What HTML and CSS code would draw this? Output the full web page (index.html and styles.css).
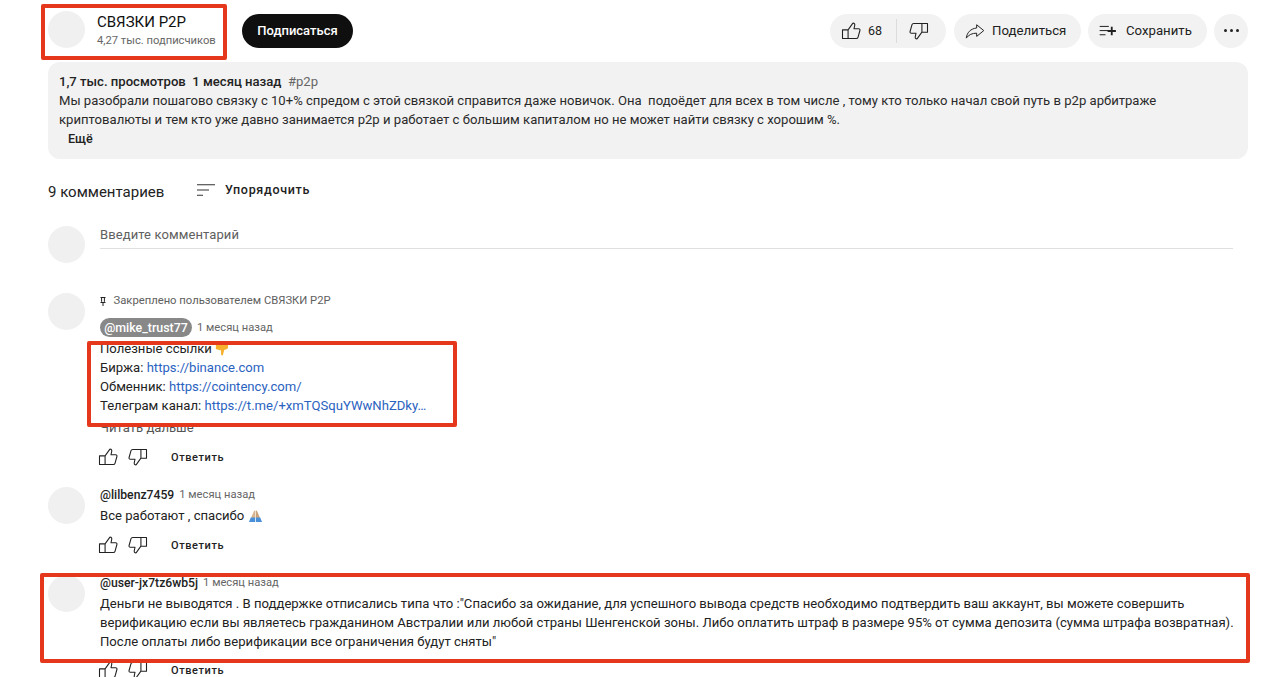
FILE: index.html
```html
<!DOCTYPE html>
<html lang="ru">
<head>
<meta charset="utf-8">
<title>СВЯЗКИ P2P</title>
<link rel="stylesheet" href="styles.css">
</head>
<body>
<svg class="defs" width="0" height="0" aria-hidden="true">
  <symbol id="like" viewBox="0 0 24 24"><path d="M8.5 21H1.8V10.6H8.5M8.5 21V10.6L14.3 2.6C15.8 2.4 16.8 3.4 16.5 5L15.6 9.3H21.2C22.4 9.3 23 10.3 22.7 11.4L20.4 19.6C20.1 20.6 19.3 21 18.4 21H8.5Z" fill="none" stroke="currentColor" stroke-width="1.3" stroke-linejoin="round"/></symbol>
  <symbol id="dislike" viewBox="0 0 24 24"><path d="M15.5 3H22.2V13.4H15.5M15.5 3V13.4L9.7 21.4C8.2 21.6 7.2 20.6 7.5 19L8.4 14.7H2.8C1.6 14.7 1 13.7 1.3 12.6L3.6 4.4C3.9 3.4 4.7 3 5.6 3H15.5Z" fill="none" stroke="currentColor" stroke-width="1.3" stroke-linejoin="round"/></symbol>
</svg>

<main class="page">
  <header class="top">
    <div class="channel">
      <div class="avatar"></div>
      <div class="channel-text">
        <div class="channel-name">СВЯЗКИ P2P</div>
        <div class="channel-subs">4,27 тыс. подписчиков</div>
      </div>
    </div>
    <button class="subscribe">Подписаться</button>
    <div class="actions">
      <div class="pill like-pill">
        <svg class="ico"><use href="#like"/></svg>
        <span class="like-count">68</span>
        <span class="divider"></span>
        <svg class="ico"><use href="#dislike"/></svg>
      </div>
      <div class="pill share">
        <svg class="ico" viewBox="0 0 24 24"><path d="M14 4.5L22.5 11.5L14 18.5V14.6C8.5 14.6 4.5 16.5 1.5 20.5C2.5 14 6.5 9.2 14 8.4V4.5Z" fill="none" stroke="currentColor" stroke-width="1.2" stroke-linejoin="round"/></svg>
        <span>Поделиться</span>
      </div>
      <div class="pill save">
        <svg class="ico" viewBox="0 0 24 24"><path d="M2 6.5H13M2 11.5H13M2 16.5H9" fill="none" stroke="currentColor" stroke-width="1.2"/><path d="M16.5 7V17M11.5 12H21.5" fill="none" stroke="currentColor" stroke-width="2.2"/></svg>
        <span>Сохранить</span>
      </div>
      <div class="pill more"><i></i><i></i><i></i></div>
    </div>
  </header>

  <section class="description">
    <div class="meta"><b>1,7 тыс. просмотров&nbsp; 1 месяц назад</b>&nbsp; <span class="tag">#p2p</span></div>
    <div>Мы разобрали пошагово связку с 10+% спредом с этой связкой справится даже новичок. Она&nbsp; подоёдет для всех в том числе , тому кто только начал свой путь в p2p арбитраже</div>
    <div>криптовалюты и тем кто уже давно занимается p2p и работает с большим капиталом но не может найти связку с хорошим %.</div>
    <div class="more-link">Ещё</div>
  </section>

  <section class="comments-head">
    <h2 class="count">9 комментариев</h2>
    <svg class="sort-ico" viewBox="0 0 18 12"><path d="M0 .7H18M0 6H12M0 11.3H6" fill="none" stroke="#333" stroke-width="1.1"/></svg>
    <span class="sort-label">Упорядочить</span>
  </section>

  <section class="add-comment">
    <div class="avatar"></div>
    <div class="input">Введите комментарий</div>
  </section>

  <article class="comment first">
    <div class="avatar"></div>
    <div class="body">
      <div class="pinned"><svg class="pin" viewBox="0 0 6 9"><path d="M.5.5H5.5M1.6 1V4.5L.8 5.5H5.2L4.4 4.5V1M3 5.5V9" fill="none" stroke="#222" stroke-width="1"/></svg>Закреплено пользователем СВЯЗКИ P2P</div>
      <div class="byline"><span class="chip">@mike_trust77</span><span class="time">1 месяц назад</span></div>
      <div class="text">
        <div>Полезные ссылки <svg class="emoji" viewBox="0 0 16 16"><path d="M1 3.5L12 1.5C14 1.5 15 3 15 5C15 7 14 8.5 12 8.5L10.5 9L9 15C8 15.5 7 15 7 14L6.8 9.5C5 9.5 3 8.5 1 8Z" fill="#f5b12e"/></svg></div>
        <div>Биржа: <a href="#">https://binance.com</a></div>
        <div>Обменник: <a href="#">https://cointency.com/</a></div>
        <div>Телеграм канал: <a href="#">https://t.me/+xmTQSquYWwNhZDky…</a></div>
      </div>
      <div class="read-more">Читать дальше</div>
      <div class="toolbar">
        <svg class="ico"><use href="#like"/></svg>
        <svg class="ico"><use href="#dislike"/></svg>
        <span class="reply">Ответить</span>
      </div>
    </div>
  </article>

  <article class="comment second">
    <div class="avatar"></div>
    <div class="body">
      <div class="byline plain"><span class="author">@lilbenz7459</span><span class="time">1 месяц назад</span></div>
      <div class="text">Все работают , спасибо <svg class="emoji pray" viewBox="0 0 16 14"><path d="M7.7 1V9H3.2L6.5 1.5Z" fill="#d9b48f"/><path d="M8.3 1V9H12.8L9.5 1.5Z" fill="#c9a27c"/><path d="M1 13.5L3 8.5H7.6V13.5ZM15 13.5L13 8.5H8.4V13.5Z" fill="#4a90d9"/></svg></div>
      <div class="toolbar">
        <svg class="ico"><use href="#like"/></svg>
        <svg class="ico"><use href="#dislike"/></svg>
        <span class="reply">Ответить</span>
      </div>
    </div>
  </article>

  <article class="comment third">
    <div class="avatar"></div>
    <div class="body">
      <div class="byline plain"><span class="author">@user-jx7tz6wb5j</span><span class="time">1 месяц назад</span></div>
      <div class="text">
        <div>Деньги не выводятся . В поддержке отписались типа что :"Спасибо за ожидание, для успешного вывода средств необходимо подтвердить ваш аккаунт, вы можете совершить</div>
        <div>верификацию если вы являетесь гражданином Австралии или любой страны Шенгенской зоны. Либо оплатить штраф в размере 95% от сумма депозита (сумма штрафа возвратная).</div>
        <div>После оплаты либо верификации все ограничения будут сняты"</div>
      </div>
      <div class="toolbar">
        <svg class="ico"><use href="#like"/></svg>
        <svg class="ico"><use href="#dislike"/></svg>
        <span class="reply">Ответить</span>
      </div>
    </div>
  </article>
</main>

<div class="mark mark-channel"></div>
<div class="mark mark-links"></div>
<div class="mark mark-comment"></div>
</body>
</html>
```

FILE: styles.css
```css
* { box-sizing: border-box; }
html, body { margin: 0; height: 677px; overflow: hidden; background: #fff; }
body { font-family: Roboto, "Liberation Sans", sans-serif; color: #1a1a1a; font-size: 13.5px; position: relative; }
.defs { position: absolute; }
.page { padding: 11px 16px 0 48px; }
.avatar { width: 37px; height: 37px; border-radius: 50%; background: #f0f0f0; flex: none; }
.ico { width: 20px; height: 20px; color: #222; flex: none; display: block; }

.top { display: flex; align-items: center; height: 37px; }
.channel { display: flex; gap: 12px; width: 194px; }
.channel-text { padding-top: 1px; }
.channel-name { font-size: 15px; line-height: 20px; color: #111; }
.channel-subs { font-size: 11.2px; line-height: 16px; color: #666; margin-top: 1px; }
.subscribe { width: 111px; height: 34px; margin-top: 3px; padding: 0 0 2px; border: 0; border-radius: 17px; background: #0f0f0f; color: #fff; font: 500 13px Roboto, sans-serif; }
.actions { margin-left: auto; margin-top: 3px; display: flex; gap: 7px; }
.pill { height: 34px; border-radius: 17px; background: #f2f2f2; display: flex; align-items: center; font-size: 13.2px; color: #222; padding-bottom: 1px; }
.like-pill { width: 116px; padding-left: 11px; margin-right: 1px; }
.like-count { margin-left: 7px; font-size: 12.5px; }
.divider { width: 1px; height: 24px; background: #dcdcdc; margin: 0 12px 0 14px; }
.share { width: 127px; padding-left: 11px; gap: 7px; }
.save { width: 119px; padding-left: 10px; gap: 8px; }
.more { width: 34px; justify-content: center; gap: 3px; }
.more i { width: 3px; height: 3px; border-radius: 50%; background: #222; }

.description { margin-top: 14px; height: 97px; padding: 10px 11px; border-radius: 12px; background: #f2f2f2; font-size: 13.1px; line-height: 19px; color: #2a2a2a; }
.meta b { font-weight: 500; color: #222; }
.tag { color: #666; }
.more-link { margin-left: 9px; font-size: 12.6px; font-weight: 500; color: #222; }

.comments-head { display: flex; align-items: center; margin-top: 20px; height: 20px; }
.count { margin: 0; width: 149px; font-size: 15px; font-weight: 400; color: #222; position: relative; top: 3px; }
.sort-ico { width: 18px; height: 12px; flex: none; position: relative; top: 1px; }
.sort-label { margin-left: 10px; font-size: 12.5px; font-weight: 500; letter-spacing: .7px; color: #222; }

.add-comment { display: flex; gap: 15px; margin-top: 27px; padding-right: 15px; }
.input { flex: 1; height: 23px; padding-top: 1px; border-bottom: 1px solid #e0e0e0; font-size: 13px; line-height: 16px; color: #606060; letter-spacing: .1px; }

.comment { display: flex; gap: 15px; }
.first { margin-top: 30px; }
.second { margin-top: 20px; }
.third { margin-top: 20px; }
.body { flex: 1; min-width: 0; }
.pinned { display: flex; align-items: center; margin-top: 1px; font-size: 11.25px; line-height: 14px; color: #606060; }
.pin { width: 6px; height: 9px; margin-right: 8px; flex: none; margin-left: -.5px; }
.byline { display: flex; align-items: center; margin-top: 10px; height: 19px; font-size: 11.2px; }
.byline.plain { margin-top: 0; height: 15px; }
.chip { height: 19px; width: 92px; border-radius: 10px; background: #888; color: #fff; font-size: 12.4px; font-weight: 500; text-align: center; line-height: 19px; }
.author { font-size: 12.2px; font-weight: 500; color: #222; }
.time { margin-left: 5px; color: #666; }
.text { font-size: 13.1px; line-height: 19px; color: #222; margin-top: 2px; }
.second .text { margin-top: 4px; }
.third .text { margin-top: 4px; }
.text a { color: #2a62c0; text-decoration: none; }
.read-more { margin-top: 3px; font-size: 13.1px; line-height: 19px; color: #555; }
.toolbar { display: flex; align-items: center; gap: 10px; height: 20px; margin-top: 10px; margin-left: -2px; }
.third .toolbar { margin-top: 9px; }
.reply { margin-left: 13px; font-size: 11px; font-weight: 500; letter-spacing: .6px; color: #222; }
.emoji { width: 14px; height: 14px; vertical-align: -3px; }
.pray { width: 15px; height: 14px; }

.mark { position: absolute; border: 4px solid #e4371c; border-radius: 2px; }
.mark-channel { left: 41px; top: 4px; width: 186px; height: 56px; }
.mark-links { left: 87px; top: 341px; width: 370px; height: 86px; }
.mark-comment { left: 40px; top: 573px; width: 1210px; height: 90px; }
```
